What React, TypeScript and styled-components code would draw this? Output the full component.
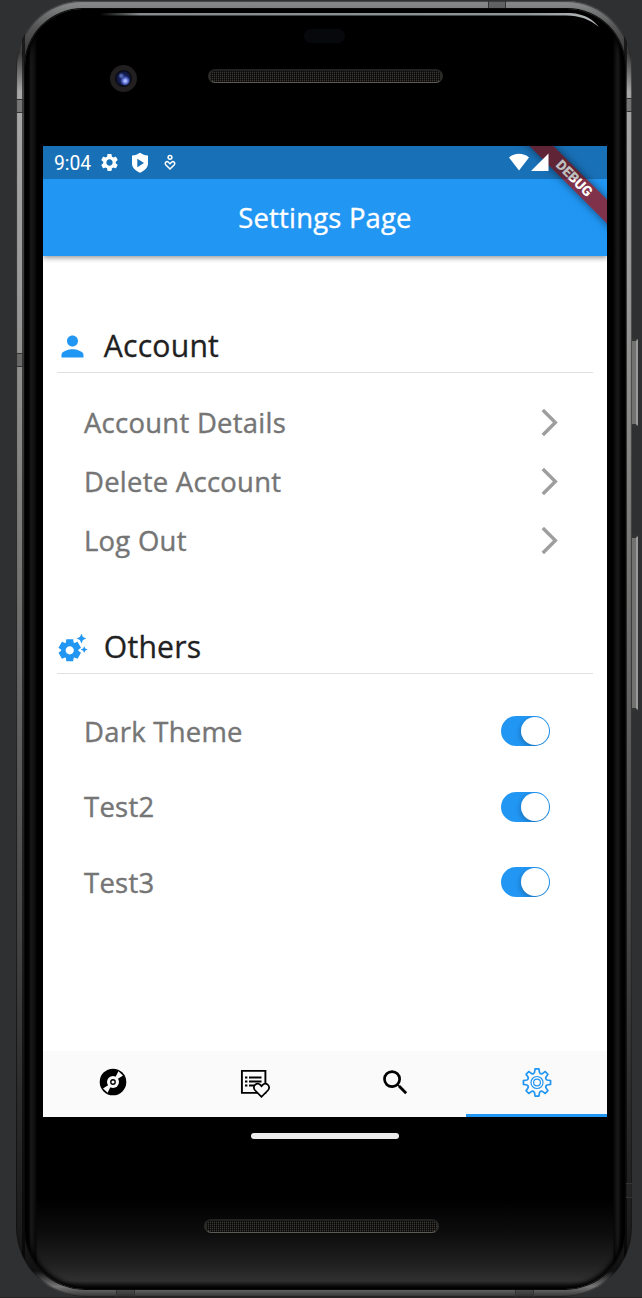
import React from 'react';
import styled, { createGlobalStyle, css } from 'styled-components';
import {
  MdPerson,
  MdSettings,
  MdSettingsSuggest,
  MdArrowForwardIos,
  MdSearch,
} from 'react-icons/md';

const BLUE = '#2196f3';

const GlobalStyle = createGlobalStyle`
  * { box-sizing: border-box; }
  body { margin: 0; background: #2f3032; font-family: 'Open Sans', 'Noto Sans', sans-serif; }
  svg { display: block; flex: none; }
`;

const Stage = styled.main`
  position: relative;
  width: 642px;
  height: 1298px;
  overflow: hidden;
  padding: 1px 10px 1px 16px;
  background: #2f3032;
  border-bottom: 1px solid #292225;
`;

const Shell = styled.div`
  position: relative;
  height: 1296px;
  padding: 8px 7px 8px 9px;
  border-radius: 66px 66px 70px 70px;
  background:
    linear-gradient(90deg, rgba(0, 0, 0, 0.35) 0 1px, transparent 1px 6px, rgba(0, 0, 0, 0.6) 6px 9px, transparent 9px 608px, rgba(0, 0, 0, 0.6) 608px 611px, transparent 611px),
    linear-gradient(180deg, #8b8e8f 0, #555 2%, #3a3a3a 4%, #a8a8a8 7%, #9a9a9a 22%, #858583 35%, #666 52%, #444 72%, #2b2b2b 85%, #1b1b1b 95%, #111 98%, #777 99.2%, #333 100%);
  box-shadow: inset 0 0 1px 1px rgba(20, 20, 20, 0.6);
`;

const Face = styled.div`
  position: relative;
  display: flex;
  flex-direction: column;
  height: 1280px;
  padding: 0 18px;
  border-radius: 58px 58px 60px 60px;
  overflow: hidden;
  background:
    linear-gradient(90deg, #000 0 3px, #1b1b1b 6px, #070707 11px, transparent 12px 588px, #070707 589px, #1b1b1b 593px, #000 597px),
    linear-gradient(180deg, #000 0 1190px, #0d0d0d 1225px, #202020 1255px, #303030 1272px, #080808 1280px);
  box-shadow: 0 0 0 1px #0a0a0a, inset 0 0 4px 3px #000;
`;

const Seam = styled.i<{ $x: number; $y: number; $w: number; $h: number }>`
  position: absolute;
  left: ${(p) => p.$x}px;
  top: ${(p) => p.$y}px;
  width: ${(p) => p.$w}px;
  height: ${(p) => p.$h}px;
  background: rgba(45, 45, 45, 0.4);
  ${(p) =>
    p.$h > p.$w
      ? css`border-block: 1px solid #333;`
      : css`border-inline: 1px solid #333;`}
`;

const SideButton = styled.i<{ $top: number; $height: number }>`
  position: absolute;
  left: 631px;
  top: ${(p) => p.$top}px;
  width: 7px;
  height: ${(p) => p.$height}px;
  border: 1px solid #555;
  border-right: 2px solid #999;
  border-block: 3px solid #333;
  border-radius: 0 3px 3px 0;
  background: #727270;
`;

const Glare = styled.svg`
  position: absolute;
  left: 75px;
  top: 4px;
`;

const TopBezel = styled.div`
  display: flex;
  flex-direction: column;
  height: 137px;
  padding-top: 20px;
`;

const Sensor = styled.div`
  width: 41px;
  height: 14px;
  margin-left: 261px;
  border-radius: 7px;
  background: #07080c;
`;

const CameraRow = styled.div`
  display: flex;
  align-items: center;
  gap: 71px;
  margin: 22px 0 0 67px;
`;

const Camera = styled.div`
  display: grid;
  place-items: center;
  width: 27px;
  height: 27px;
  border-radius: 50%;
  background: #211f20;
`;

const Lens = styled.div`
  width: 17px;
  height: 17px;
  border: 1px solid #08080c;
  border-radius: 50%;
  background:
    radial-gradient(circle at 62% 66%, #aebdff 0 1px, #5367c8 3px, transparent 5px),
    radial-gradient(circle at 35% 32%, #576bb0 0 1px, transparent 3px),
    radial-gradient(circle, #1d2a72 20%, #0a0e28 75%);
`;

const Grille = styled.div`
  width: 235px;
  height: 14px;
  border: 2px solid #2b2b29;
  border-top-color: #222;
  border-bottom: 1px solid #5b5a55;
  border-radius: 7px;
  background:
    repeating-linear-gradient(0deg, rgba(0, 0, 0, 0.5) 0 1px, transparent 1px 2px),
    repeating-linear-gradient(90deg, #3a3732 0 1px, #131210 1px 2px);
`;

const TopGrille = styled(Grille)`
  margin-top: -6px;
`;

const Screen = styled.div`
  display: flex;
  flex-direction: column;
  width: 564px;
  height: 971px;
  background: #fff;
`;

const Header = styled.header`
  position: relative;
  flex: none;
  height: 110px;
  background: ${BLUE};
  box-shadow: 0 2px 5px rgba(0, 0, 0, 0.4);
  clip-path: inset(0 0 -12px 0);
`;

const Ribbon = styled.div`
  position: absolute;
  left: 431px;
  top: 24px;
  width: 200px;
  height: 17px;
  transform: rotate(45deg);
  background: rgba(147, 30, 38, 0.83);
  box-shadow: 0 0 8px rgba(0, 0, 0, 0.5);
  color: #fff;
  font: 900 14px/17px Roboto, sans-serif;
  text-align: center;
`;

const StatusBar = styled.div`
  position: relative;
  display: flex;
  align-items: center;
  height: 33px;
  padding: 0 58px 0 11px;
  background: rgba(0, 0, 0, 0.25);
  color: #fff;
`;

const Clock = styled.span`
  width: 45px;
  padding-top: 1px;
  font: 400 19.3px/33px Roboto, sans-serif;
`;

const StatusIcons = styled.div`
  display: flex;
  align-items: center;
  gap: 10px;
`;

const SignalIcons = styled(StatusIcons)`
  gap: 2px;
  margin: -2px 0 0 auto;
`;

const Title = styled.h1`
  position: relative;
  margin: 0;
  color: #fff;
  font-size: 27.43px;
  letter-spacing: 0.2px;
  font-weight: 400;
  line-height: 77px;
  text-align: center;
  -webkit-text-stroke: 0.35px;
`;

const Content = styled.div`
  flex: 1;
  padding: 65px 14px 0;
`;

const Section = styled.section`
  & + & {
    margin-top: 52px;
  }
`;

const SectionHead = styled.div`
  display: flex;
  align-items: center;
  gap: 14px;
  height: 52px;
  padding-bottom: 1px;
  border-bottom: 1px solid #e0e0e0;
  color: ${BLUE};
  > svg {
    margin: 0 0.5px 0 -0.7px;
  }
`;

const SectionTitle = styled.h2`
  margin: 0;
  color: #212121;
  font-size: 30.17px;
  letter-spacing: 0.2px;
  font-weight: 400;
  line-height: 40px;
  -webkit-text-stroke: 0.3px;
`;

const Rows = styled.div<{ $pad: number }>`
  padding-top: ${(p) => p.$pad}px;
`;

const Row = styled.div<{ $height: number; $right: number }>`
  display: flex;
  align-items: center;
  justify-content: space-between;
  height: ${(p) => p.$height}px;
  padding: 0 ${(p) => p.$right}px 0 27px;
  color: #757575;
  font-size: 27.43px;
  letter-spacing: 0.28px;
  -webkit-text-stroke: 0.4px;
  svg {
    color: #9e9e9e;
  }
`;

const Switch = styled.div`
  display: flex;
  justify-content: flex-end;
  width: 49px;
  height: 30px;
  padding: 1px;
  border-radius: 15px;
  background: ${BLUE};
  overflow: hidden;
`;

const Thumb = styled.div`
  width: 28px;
  height: 28px;
  border-radius: 50%;
  background: #fff;
  box-shadow: -1px 2px 5px rgba(0, 0, 0, 0.22);
`;

const TabBar = styled.nav`
  display: grid;
  grid-template-columns: repeat(4, 1fr);
  height: 66px;
  background: #fafafa;
`;

const Tab = styled.div<{ $active?: boolean }>`
  display: grid;
  place-items: center;
  padding: 0 0 1px;
  color: ${(p) => (p.$active ? BLUE : '#000')};
  border-bottom: 3px solid ${(p) => (p.$active ? BLUE : 'transparent')};
`;

const BottomBezel = styled.div`
  display: flex;
  flex-direction: column;
  padding-top: 16px;
`;

const HomeBar = styled.div`
  width: 148px;
  height: 6px;
  margin: 0 0 80px 208px;
  border-radius: 3px;
  background: #ececec;
`;

const BottomGrille = styled(Grille)`
  margin-left: 161px;
`;

const ShieldPlay = () => (
  <svg width="20" height="22" viewBox="0 0 20 22" fill="currentColor">
    <path fillRule="evenodd" d="M10 .8c2.400 1.600 5 2.500 8 2.800v8.200c0 4-3.500 7-8 9-4.500-2-8-5-8-9V3.600C5 3.300 7.600 2.400 10 .8ZM7.300 6.800v8.400l6.700-4.200Z" />
  </svg>
);

const CareHeart = () => (
  <svg width="20" height="20" viewBox="0 0 20 20" fill="none" stroke="currentColor" strokeWidth="1.500">
    <circle cx="10" cy="4.300" r="1.900" />
    <path d="M10 16 5.700 11.800c-1.500-2 1-4.200 2.700-2.600L10 10.800l1.600-1.600c1.700-1.600 4.200.6 2.700 2.600Z" />
  </svg>
);

const Wifi = () => (
  <svg width="20" height="18" viewBox="0 0 20 18" fill="currentColor">
    <path d="M10 17.500 0 4.600C5.600-.4 14.400-.4 20 4.600Z" />
  </svg>
);

const Signal = () => (
  <svg width="18" height="18" viewBox="0 0 18 18" fill="currentColor">
    <path d="M17.500.500v17.500H0Z" />
  </svg>
);

const Vinyl = () => (
  <svg width="29" height="28" viewBox="0 0 29 28">
    <circle cx="14" cy="14" r="13.300" fill="currentColor" />
    <path d="M14 14 19.400 3.300 24 7.500ZM14 14 4 20.500 8.600 24.700Z" fill="#fafafa" />
    <circle cx="14" cy="14" r="6" fill="#fafafa" />
    <circle cx="14" cy="14" r="2.200" fill="none" stroke="currentColor" strokeWidth="1.400" />
  </svg>
);

const ListHeart = () => (
  <svg width="32" height="31" viewBox="-2 0 32 31" fill="none" stroke="currentColor" strokeWidth="1.900">
    <path d="M.900 3.900h23.500v22h-23.500Z" />
    <path d="M4 10.500h2.400M8 10.500h12.500M4 14.500h2.400M8 14.500h12.500M4 18.500h2.400M8 18.500h6" />
    <path
      d="M20.500 29.800 13.800 23c-2.800-3.900 2.300-8.600 5.500-5.100L20.500 19.200l1.200-1.300c3.200-3.500 8.300 1.200 5.500 5.100Z"
      fill="#fafafa"
      strokeWidth="1.700"
    />
  </svg>
);

const toothedOutline = () => {
  const at = (deg: number, r: number) => {
    const a = (deg * Math.PI) / 180;
    return `${(15 + r * Math.sin(a)).toFixed(2)} ${(15 - r * Math.cos(a)).toFixed(2)}`;
  };
  let d = '';
  for (let i = 0; i < 8; i++) {
    const c = i * 45;
    d += `${i ? 'L' : 'M'}${at(c - 14, 10.4)}L${at(c - 8, 13.7)}L${at(c + 8, 13.7)}L${at(c + 14, 10.4)}`;
    d += `Q${at(c + 22.5, 8.9)} ${at(c + 31, 10.4)}`;
  }
  return `${d}Z`;
};

const GearOutline = () => (
  <svg width="30" height="30" viewBox="0 -0.500 30 30" fill="none" stroke="currentColor" strokeLinejoin="round">
    <path d={toothedOutline()} strokeWidth="1.700" />
    <circle cx="15" cy="15" r="6" strokeWidth="1.200" />
    <circle cx="15" cy="15" r="3.400" strokeWidth="1.200" />
  </svg>
);

const accountItems = ['Account Details', 'Delete Account', 'Log Out'];
const otherItems = ['Dark Theme', 'Test2', 'Test3'];

export default function App() {
  return (
    <>
      <GlobalStyle />
      <Stage>
        <SideButton $top={338} $height={89} />
        <SideButton $top={535} $height={176} />
        <Shell>
          <Seam $x={0} $y={98} $w={9} $h={14} />
          <Seam $x={0} $y={352} $w={9} $h={14} />
          <Seam $x={608} $y={97} $w={8} $h={14} />
          <Seam $x={608} $y={1182} $w={8} $h={15} />
          <Seam $x={472} $y={0} $w={18} $h={7} />
          <Seam $x={100} $y={1288} $w={19} $h={8} />
          <Seam $x={499} $y={1288} $w={19} $h={8} />
          <Face>
            <Glare width="510" height="18" viewBox="0 0 510 18">
              <defs>
                <linearGradient id="glare" x1="0" x2="1">
                  <stop offset="0" stopColor="#000" />
                  <stop offset=".08" stopColor="#858b8c" />
                  <stop offset=".85" stopColor="#8e9596" />
                  <stop offset="1" stopColor="#b5babb" />
                </linearGradient>
              </defs>
              <path d="M0 0H470C486 1 493 7 499 14C489 6 480 3 466 2.600H0Z" fill="url(#glare)" />
            </Glare>
            <TopBezel>
              <Sensor />
              <CameraRow>
                <Camera>
                  <Lens />
                </Camera>
                <TopGrille />
              </CameraRow>
            </TopBezel>
            <Screen>
              <Header>
                <Ribbon>DEBUG</Ribbon>
                <StatusBar>
                  <Clock>9:04</Clock>
                  <StatusIcons>
                    <MdSettings size={21} />
                    <ShieldPlay />
                    <CareHeart />
                  </StatusIcons>
                  <SignalIcons>
                    <Wifi />
                    <Signal />
                  </SignalIcons>
                </StatusBar>
                <Title>Settings Page</Title>
              </Header>
              <Content>
                <Section>
                  <SectionHead>
                    <MdPerson size={33} />
                    <SectionTitle>Account</SectionTitle>
                  </SectionHead>
                  <Rows $pad={20}>
                    {accountItems.map((label) => (
                      <Row key={label} $height={59} $right={27}>
                        {label}
                        <MdArrowForwardIos size={33} />
                      </Row>
                    ))}
                  </Rows>
                </Section>
                <Section>
                  <SectionHead>
                    <MdSettingsSuggest size={33} />
                    <SectionTitle>Others</SectionTitle>
                  </SectionHead>
                  <Rows $pad={19.6}>
                    {otherItems.map((label) => (
                      <Row key={label} $height={75.400} $right={43}>
                        {label}
                        <Switch>
                          <Thumb />
                        </Switch>
                      </Row>
                    ))}
                  </Rows>
                </Section>
              </Content>
              <TabBar>
                <Tab>
                  <Vinyl />
                </Tab>
                <Tab>
                  <ListHeart />
                </Tab>
                <Tab>
                  <MdSearch size={33} />
                </Tab>
                <Tab $active>
                  <GearOutline />
                </Tab>
              </TabBar>
            </Screen>
            <BottomBezel>
              <HomeBar />
              <BottomGrille />
            </BottomBezel>
          </Face>
        </Shell>
      </Stage>
    </>
  );
}
